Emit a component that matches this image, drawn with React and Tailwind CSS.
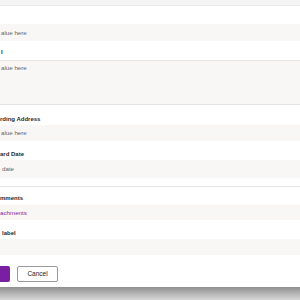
const fieldBg = 'bg-[#f8f7f5]';

function Label({ children, className = '' }) {
  return (
    <div className={`h-[8px] leading-[8px] text-[6px] font-bold text-[#2b2b2b] whitespace-nowrap ${className}`}>
      {children}
    </div>
  );
}

function Input({ children, className = '', textClass = 'text-[#666]' }) {
  return (
    <div className={`${fieldBg} flex items-center whitespace-nowrap text-[6.2px] ${textClass} ${className}`}>
      {children}
    </div>
  );
}

export default function App() {
  return (
    <div className="w-[300px] h-[300px] overflow-hidden bg-white font-['Liberation_Sans',Arial,sans-serif] flex flex-col">
      <div className="h-[6px] shrink-0 bg-[#f4f4f4] border-b border-[#e8e8e8]" />

      <div className="flex-1 flex flex-col">
        <Input className="mt-[18px] h-[17px] pl-[1px]">alue here</Input>

        <Label className="mt-[7px] pl-px">l</Label>
        <div className={`mt-[4px] h-[45px] ${fieldBg} border-y border-[#e3e3e3] pt-[3px] pl-[1px] text-[6.2px] leading-[8px] text-[#666]`}>
          alue here
        </div>

        <Label className="mt-[10px]">rding Address</Label>
        <Input className="mt-[2px] h-[16px] pl-[1px]">alue here</Input>

        <Label className="mt-[9px]">ard Date</Label>
        <Input className="mt-[2px] h-[18px] pl-[2px]">date</Input>

        <div className="mt-[8px] h-px bg-[#e6e6e6]" />

        <Label className="mt-[7px]">mments</Label>
        <Input className="mt-[3px] h-[15px]" textClass="text-[#7b1fa2]">achments</Input>

        <Label className="mt-[9px] pl-[2px] font-semibold">label</Label>
        <Input className="mt-[2px] h-[16px]" />

        <div className="mt-[11px] flex items-center gap-[7px]">
          <div className="w-[10px] h-[16px] bg-[#7b1fa2] rounded-r-[2px]" />
          <button className="w-[41px] h-[16px] border border-[#9a9a9a] rounded-[2px] bg-white text-[6.5px] text-[#222] leading-none flex items-center justify-center">
            Cancel
          </button>
        </div>
      </div>

      <div className="h-[13px] shrink-0 bg-gradient-to-b from-[#8e8e8e] via-[#b4b4b4] to-[#d6d6d6]" />
    </div>
  );
}
